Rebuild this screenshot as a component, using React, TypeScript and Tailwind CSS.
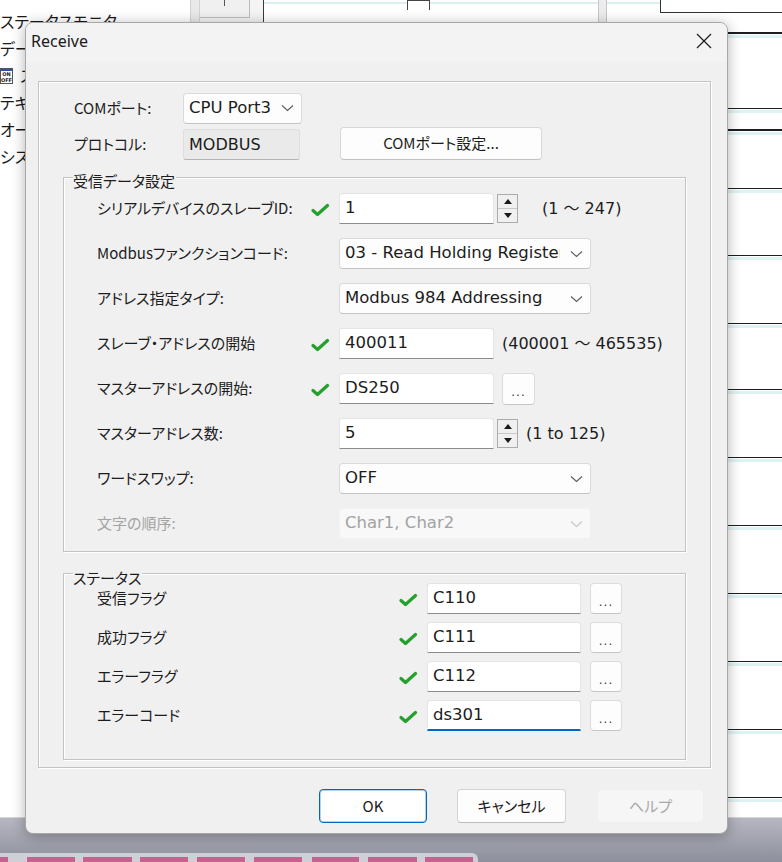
import React from 'react'

const jp = "font-['Noto_Sans_CJK_JP',sans-serif] [font-feature-settings:'palt']"
const val = "font-['DejaVu_Sans','Noto_Sans_CJK_JP',sans-serif]"

function Check() {
    return (
        <svg width="19" height="14" viewBox="0 0 19 14" className="mt-[2px]">
            <path d="M2 7.5 L6.5 11.5 L16.5 2.5" fill="none" stroke="#23a12b" strokeWidth="3.2" strokeLinecap="round" strokeLinejoin="round" />
        </svg>
    )
}

function Chevron({ muted = false }: { muted?: boolean }) {
    return (
        <svg width="13" height="8" viewBox="0 0 13 8" className="shrink-0">
            <path d="M1 1.5 L6.5 6.5 L12 1.5" fill="none" stroke={muted ? '#c6c6c6' : '#5c5c5c'} strokeWidth="1.1" />
        </svg>
    )
}

function Select({ value, className = 'w-[252px]', disabled = false }: { value: string, className?: string, disabled?: boolean }) {
    return (
        <div
            className={`flex h-[31px] items-center rounded-[4px] border pl-[5px] pr-[7px] ${className} ${
                disabled
                    ? 'border-[#f2f2f2] bg-[#f8f8f8] text-[#a2a2a2]'
                    : 'border-[#dadada] border-b-[#c4c4c4] bg-[#fdfdfd] text-[#1c1c1c]'
            }`}
        >
            <span className={`${val} mr-[10px] min-w-0 flex-1 overflow-hidden whitespace-nowrap text-[16.5px]`}>{value}</span>
            <Chevron muted={disabled} />
        </div>
    )
}

function Field({ value, className = 'w-[155px]', focused = false }: { value: string, className?: string, focused?: boolean }) {
    return (
        <div
            className={`flex h-[31px] items-center rounded-t-[3px] border border-[#e4e4e4] bg-white pl-[5px] text-[16.5px] text-[#1c1c1c] ${val} ${className} ${
                focused ? 'border-b-2 border-b-[#0067c0]' : 'border-b-[#8c8c8c]'
            }`}
        >
            {value}
        </div>
    )
}

function Spin() {
    return (
        <div className="ml-[3px] flex h-[29px] w-[21px] flex-col border border-[#ababab] bg-[#f0f0f0]">
            <div className="flex flex-1 items-center justify-center border-b border-[#c8c8c8]">
                <svg width="8" height="5" viewBox="0 0 8 5"><path d="M0 5 L4 0 L8 5 Z" fill="#1a1a1a" /></svg>
            </div>
            <div className="flex flex-1 items-center justify-center">
                <svg width="8" height="5" viewBox="0 0 8 5"><path d="M0 0 L4 5 L8 0 Z" fill="#1a1a1a" /></svg>
            </div>
        </div>
    )
}

function Dots({ className }: { className: string }) {
    return (
        <div
            className={`flex items-center justify-center rounded-[4px] border border-[#dcdcdc] border-b-[#c6c6c6] bg-[#fdfdfd] pt-[7px] text-[12px] leading-none tracking-[1px] text-[#404040] ${val} ${className}`}
        >
            ...
        </div>
    )
}

function Row({ label, check = false, disabled = false, labelWidth = 'w-[213px]', children }: {
    label: string, check?: boolean, disabled?: boolean, labelWidth?: string, children: React.ReactNode
}) {
    return (
        <div className="flex h-[31px] items-center">
            <div className={`${jp} ${labelWidth} whitespace-nowrap text-[15px] ${disabled ? 'text-[#a3a3a3]' : 'text-[#1c1c1c]'}`}>
                {label}
            </div>
            <div className="flex w-[29px] items-center pl-[1px]">{check && <Check />}</div>
            {children}
        </div>
    )
}

function Group({ title, titleTop, className, children }: { title: string, titleTop: string, className: string, children: React.ReactNode }) {
    return (
        <div className={`relative mx-[24px] border border-[#c3c3c3] shadow-[1px_1px_0_#ffffff,inset_1px_1px_0_#ffffff] ${className}`}>
            <span className={`${jp} absolute left-[9px] ${titleTop} bg-[#f0f0f0] pr-[1px] text-[15px] leading-[20px] text-[#1c1c1c]`}>
                {title}
            </span>
            {children}
        </div>
    )
}

function OnOffIcon() {
    return (
        <div className="flex h-[16px] w-[13px] flex-col items-center border border-[#555] bg-white font-['DejaVu_Sans',sans-serif] text-[5px] font-bold leading-[6px] text-[#222]">
            <div className="h-[2px] w-full bg-[#2f4fa8]" />
            <span>ON</span>
            <span>OFF</span>
        </div>
    )
}

function ReceiveDialog() {
    return (
        <div className="absolute left-[25px] top-[22px] flex h-[812px] w-[703px] flex-col overflow-hidden rounded-[8px] border border-[#a8a8a8] bg-[#f0f0f0] shadow-[0_2px_14px_rgba(0,0,0,0.3)]">
            {/* Title bar */}
            <div className="flex h-[39px] shrink-0 items-center justify-between bg-[#f3f3f3] pb-[3px] pl-[5px]">
                <span className="font-['Noto_Sans',sans-serif] text-[16px] text-[#1a1a1a]">Receive</span>
                <div className="flex w-[47px] items-center justify-center">
                    <svg width="16" height="16" viewBox="0 0 16 16">
                        <path d="M1 1 L15 15 M15 1 L1 15" stroke="#1a1a1a" strokeWidth="1.2" />
                    </svg>
                </div>
            </div>

            {/* Body frame */}
            <div className="ml-[12px] mr-[16px] mt-[19px] flex h-[687px] flex-col border border-[#c3c3c3] pt-[11px] shadow-[1px_1px_0_#ffffff,inset_1px_1px_0_#ffffff]">
                <div className="flex h-[30px] items-center pl-[35px]">
                    <span className={`${jp} w-[109px] text-[15px] text-[#1c1c1c]`}>COMポート:</span>
                    <Select value="CPU Port3" className="h-[30px] w-[119px] pr-[6px]" />
                </div>
                <div className="mt-[4px] flex h-[33px] items-end pl-[35px]">
                    <span className={`${jp} w-[109px] self-center pt-[1px] text-[15px] text-[#1c1c1c]`}>プロトコル:</span>
                    <div className={`${val} flex h-[31px] w-[117px] items-center rounded-[3px] border border-[#dedede] border-b-[#b4b4b4] bg-[#eaeaea] pl-[5px] text-[16px] text-[#1c1c1c]`}>
                        MODBUS
                    </div>
                    <button className={`${jp} ml-[40px] flex h-[33px] w-[202px] items-center justify-center rounded-[4px] border border-[#d8d8d8] border-b-[#c2c2c2] bg-[#fdfdfd] text-[15px] text-[#1c1c1c]`}>
                        COMポート設定...
                    </button>
                </div>

                <Group title="受信データ設定" titleTop="top-[-7px]" className="mt-[17px] flex h-[375px] flex-col gap-[14px] pl-[33px] pt-[15px]">
                    <Row label="シリアルデバイスのスレーブID:" check>
                        <Field value="1" />
                        <Spin />
                        <span className={`${val} ml-[24px] text-[16px] text-[#1c1c1c]`}>(1 ～ 247)</span>
                    </Row>
                    <Row label="Modbusファンクションコード:">
                        <Select value="03 - Read Holding Registers" />
                    </Row>
                    <Row label="アドレス指定タイプ:">
                        <Select value="Modbus 984 Addressing" />
                    </Row>
                    <Row label="スレーブ・アドレスの開始" check>
                        <Field value="400011" />
                        <span className={`${val} ml-[8px] text-[16px] text-[#1c1c1c]`}>(400001 ～ 465535)</span>
                    </Row>
                    <Row label="マスターアドレスの開始:" check>
                        <Field value="DS250" />
                        <Dots className="ml-[8px] h-[32px] w-[33px]" />
                    </Row>
                    <Row label="マスターアドレス数:">
                        <Field value="5" />
                        <Spin />
                        <span className={`${val} ml-[8px] text-[16px] text-[#1c1c1c]`}>(1 to 125)</span>
                    </Row>
                    <Row label="ワードスワップ:">
                        <Select value="OFF" />
                    </Row>
                    <Row label="文字の順序:" disabled>
                        <Select value="Char1, Char2" disabled />
                    </Row>
                </Group>

                <Group title="ステータス" titleTop="top-[-6px]" className="mt-[21px] flex h-[187px] flex-col gap-[8px] pl-[33px] pt-[9px]">
                    <Row label="受信フラグ" check labelWidth="w-[301px]">
                        <Field value="C110" className="w-[154px]" />
                        <Dots className="ml-[9px] h-[31px] w-[32px]" />
                    </Row>
                    <Row label="成功フラグ" check labelWidth="w-[301px]">
                        <Field value="C111" className="w-[154px]" />
                        <Dots className="ml-[9px] h-[31px] w-[32px]" />
                    </Row>
                    <Row label="エラーフラグ" check labelWidth="w-[301px]">
                        <Field value="C112" className="w-[154px]" />
                        <Dots className="ml-[9px] h-[31px] w-[32px]" />
                    </Row>
                    <Row label="エラーコード" check labelWidth="w-[301px]">
                        <Field value="ds301" className="w-[154px]" focused />
                        <Dots className="ml-[9px] h-[31px] w-[32px]" />
                    </Row>
                </Group>
            </div>

            {/* Buttons */}
            <div className={`${jp} mt-[21px] flex justify-end pr-[23px] text-[15px]`}>
                <button className="h-[34px] w-[108px] rounded-[4px] border border-[#0067c0] bg-white text-[#1a1a1a] shadow-[inset_0_0_0_1px_rgba(0,103,192,0.3)]">
                    OK
                </button>
                <button className="ml-[30px] h-[34px] w-[109px] rounded-[4px] border border-[#d4d4d4] border-b-[#bdbdbd] bg-[#fdfdfd] text-[#1a1a1a]">
                    キャンセル
                </button>
                <button className="ml-[31px] h-[34px] w-[107px] rounded-[4px] border border-[#efefef] bg-[#f6f6f6] text-[#a8a8a8]">
                    ヘルプ
                </button>
            </div>
        </div>
    )
}

const rungs = [
    'h-[76px] border-t-2',
    'h-[21px] border-t',
    'h-[59px] border-t-2',
    'h-[67px] border-t',
    'h-[68px] border-t',
    'h-[66px] border-t',
    'h-[68px] border-t',
    'h-[68px] border-t',
    'h-[68px] border-t',
    'h-[68px] border-t',
    'h-[68px] border-t',
    'h-[68px] border-t',
    'flex-1 border-t',
]

const tiles = ['w-[8px]', 'ml-[19px] w-[48px]', 'ml-[8px] w-[49px]', 'ml-[8px] w-[48px]', 'ml-[9px] w-[48px]', 'ml-[9px] w-[48px]', 'ml-[10px] w-[47px]', 'ml-[9px] w-[49px]', 'ml-[8px] w-[48px]']

export default function App() {
    return (
        <div className="relative h-[862px] w-[782px] overflow-hidden bg-[#f3f3f3]">
            {/* Background application */}
            <div className="flex h-[818px] border-b border-[#d6d6d6] bg-white">
                <div className={`${jp} w-[190px] shrink-0 bg-white pt-[8px] text-[16px] leading-[27px] text-[#1a1a1a]`}>
                    <div className="whitespace-nowrap">ステータスモニタ</div>
                    <div className="whitespace-nowrap">データビュー</div>
                    <div className="flex items-center gap-[7px] whitespace-nowrap">
                        <OnOffIcon />
                        <span>スイッチ</span>
                    </div>
                    <div className="whitespace-nowrap">テキスト</div>
                    <div className="whitespace-nowrap">オーバーライド</div>
                    <div className="whitespace-nowrap">システム設定</div>
                </div>
                <div className="w-[10px] shrink-0 border-x border-[#d2d2d2] bg-[#e9e9e9]" />
                <div className="w-[63px] shrink-0 bg-[#f4f4f4]">
                    <div className="flex h-[18px] w-[50px] justify-center border-b border-r border-[#bcbcbc] bg-[#f0f0f0]">
                        <div className="h-[6px] w-[1px] bg-[#555]" />
                    </div>
                </div>
                <div className="flex flex-1 flex-col border-l border-[#3a3a3a] bg-white">
                    <div className="flex h-[32px]">
                        <div className="flex w-[334px] items-start">
                            <div className="mt-[2px] h-[2px] w-[143px] bg-[#dbf0f2]" />
                            <div className="h-[10px] w-[23px] border-x border-t border-[#444]" />
                            <div className="mt-[2px] h-[2px] flex-1 bg-[#dbf0f2]" />
                        </div>
                        <div className="w-[9px] border-x border-[#c6c6c6] bg-[#ececec]" />
                        <div className="w-[53px]">
                            <div className="mt-[2px] h-[2px] bg-[#dbf0f2]" />
                        </div>
                        <div className="h-[13px] flex-1 border-b border-l border-[#333]" />
                    </div>
                    {rungs.map((cls, i) => (
                        <div key={i} className={`${cls} border-[#1e1e1e]`}>
                            <div className="mt-[1px] h-[3px] bg-[#e0f3f4]" />
                        </div>
                    ))}
                </div>
            </div>
            <div className="flex h-[44px] flex-col bg-linear-to-b from-[#b6b7c1] to-[#8d8f9c]">
                <div className="mt-auto flex h-[9px] w-[478px] items-end rounded-tr-[6px] bg-[#cfd0d7]">
                    {tiles.map((cls, i) => (
                        <div key={i} className={`${cls} h-[5px] bg-[#c4638f]`} />
                    ))}
                </div>
            </div>

            <ReceiveDialog />
        </div>
    )
}
